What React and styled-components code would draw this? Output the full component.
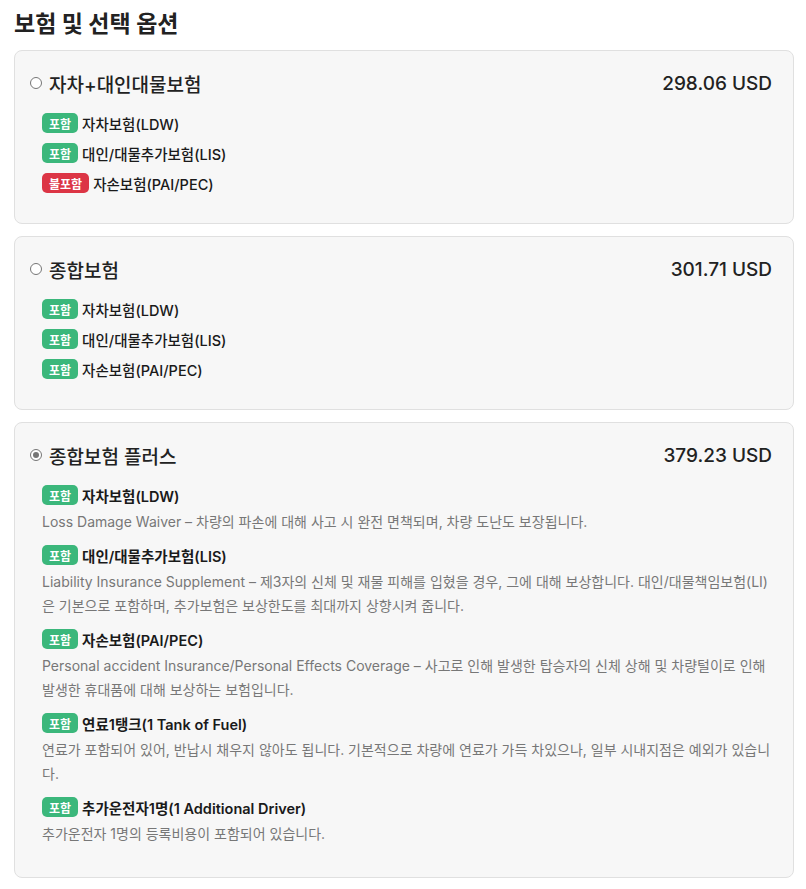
import styled, { createGlobalStyle } from 'styled-components'

const GlobalStyle = createGlobalStyle`
  body {
    margin: 0;
    background: #fff;
    font-family: Inter, "Noto Sans CJK KR", sans-serif;
    color: #222;
  }
`

const Page = styled('section')`
  padding: 10px 12px 12px 14px;
`

const Heading = styled('h2')`
  margin: 0 0 12px;
  font-size: 23px;
  line-height: 28px;
  font-weight: 700;
  color: #222;
`

const Cards = styled('div')`
  display: flex;
  flex-direction: column;
  gap: 12px;
`

const Card = styled('div')`
  background: #f7f7f7;
  border: 1px solid #e0e0e0;
  border-radius: 8px;
  padding: 19px 21px 20px 15px;
`

const OptionHead = styled('div')`
  display: flex;
  align-items: center;
  justify-content: space-between;
  height: 26px;
  margin-bottom: 16px;
`

const OptionName = styled('label')`
  display: flex;
  align-items: center;
  gap: 7px;
  font-size: 19px;
  font-weight: 500;
  color: #222;
`

const Radio = styled('span')`
  width: 10px;
  height: 10px;
  border-radius: 50%;
  border: 1px solid #767676;
  background: #fff;
  display: flex;
  align-items: center;
  justify-content: center;
  &::after {
    content: '';
    display: ${p => (p.$checked ? 'block' : 'none')};
    width: 6px;
    height: 6px;
    border-radius: 50%;
    background: #767676;
  }
`

const Price = styled('span')`
  font-size: 19px;
  font-weight: 500;
  color: #222;
`

const List = styled('ul')`
  list-style: none;
  margin: 0;
  padding: 0 0 9px 12px;
  display: flex;
  flex-direction: column;
  gap: 8px;
`

const Item = styled('li')`
  display: flex;
  flex-direction: column;
`

const ItemRow = styled('div')`
  display: flex;
  align-items: center;
  gap: 4px;
  height: 22px;
`

const Badge = styled('span')`
  display: inline-flex;
  align-items: center;
  height: 20px;
  padding: 0 7px;
  border-radius: 5px;
  font-size: 12px;
  font-weight: 700;
  color: #fff;
  background: ${p => (p.$included ? '#3bb77b' : '#dc3545')};
`

const ItemName = styled('span')`
  font-size: 14.5px;
  font-weight: ${p => (p.$strong ? 600 : 500)};
  color: #1a1a1a;
`

const Desc = styled('p')`
  margin: 4px 0 2px;
  font-size: 14px;
  line-height: 24px;
  color: #777;
`

const options = [
  {
    name: '자차+대인대물보험',
    price: '298.06 USD',
    items: [
      { name: '자차보험(LDW)', included: true },
      { name: '대인/대물추가보험(LIS)', included: true },
      { name: '자손보험(PAI/PEC)', included: false },
    ],
  },
  {
    name: '종합보험',
    price: '301.71 USD',
    items: [
      { name: '자차보험(LDW)', included: true },
      { name: '대인/대물추가보험(LIS)', included: true },
      { name: '자손보험(PAI/PEC)', included: true },
    ],
  },
  {
    name: '종합보험 플러스',
    price: '379.23 USD',
    checked: true,
    items: [
      {
        name: '자차보험(LDW)',
        included: true,
        desc: 'Loss Damage Waiver – 차량의 파손에 대해 사고 시 완전 면책되며, 차량 도난도 보장됩니다.',
      },
      {
        name: '대인/대물추가보험(LIS)',
        included: true,
        desc: 'Liability Insurance Supplement – 제3자의 신체 및 재물 피해를 입혔을 경우, 그에 대해 보상합니다. 대인/대물책임보험(LI)은 기본으로 포함하며, 추가보험은 보상한도를 최대까지 상향시켜 줍니다.',
      },
      {
        name: '자손보험(PAI/PEC)',
        included: true,
        desc: 'Personal accident Insurance/Personal Effects Coverage – 사고로 인해 발생한 탑승자의 신체 상해 및 차량털이로 인해 발생한 휴대품에 대해 보상하는 보험입니다.',
      },
      {
        name: '연료1탱크(1 Tank of Fuel)',
        included: true,
        desc: '연료가 포함되어 있어, 반납시 채우지 않아도 됩니다. 기본적으로 차량에 연료가 가득 차있으나, 일부 시내지점은 예외가 있습니다.',
      },
      {
        name: '추가운전자1명(1 Additional Driver)',
        included: true,
        desc: '추가운전자 1명의 등록비용이 포함되어 있습니다.',
      },
    ],
  },
]

const App = () => {
  return (
    <Page>
      <GlobalStyle />
      <Heading>보험 및 선택 옵션</Heading>
      <Cards>
        {options.map(opt => (
          <Card key={opt.name}>
            <OptionHead>
              <OptionName>
                <Radio $checked={opt.checked} />
                {opt.name}
              </OptionName>
              <Price>{opt.price}</Price>
            </OptionHead>
            <List>
              {opt.items.map(item => (
                <Item key={item.name}>
                  <ItemRow>
                    <Badge $included={item.included}>{item.included ? '포함' : '불포함'}</Badge>
                    <ItemName $strong={!!item.desc}>{item.name}</ItemName>
                  </ItemRow>
                  {item.desc && <Desc>{item.desc}</Desc>}
                </Item>
              ))}
            </List>
          </Card>
        ))}
      </Cards>
    </Page>
  )
}

export default App
